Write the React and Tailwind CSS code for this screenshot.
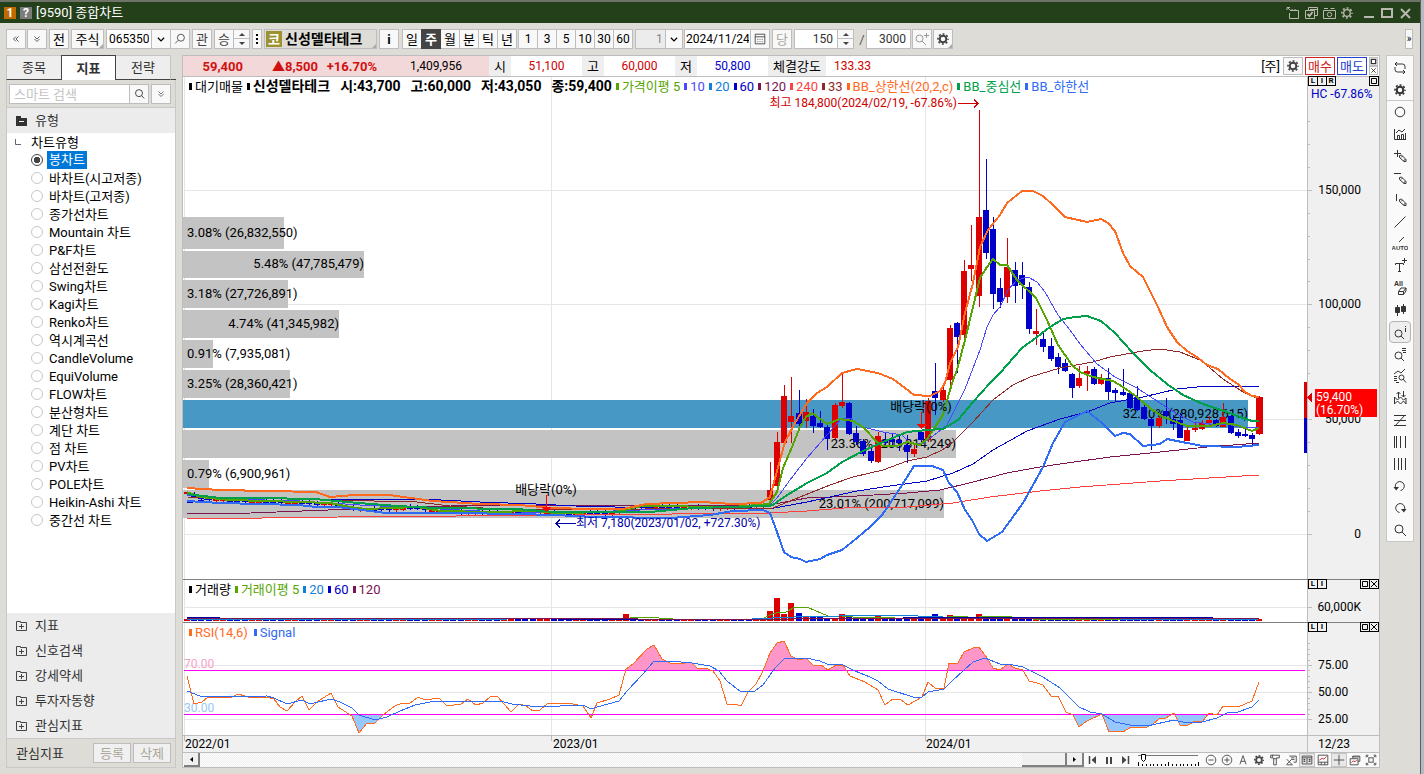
import { useState } from "react";

const CHART_TYPES = [
  "봉차트", "바차트(시고저종)", "바차트(고저종)", "종가선차트", "Mountain 차트", "P&F차트", "삼선전환도",
  "Swing차트", "Kagi차트", "Renko차트", "역시계곡선", "CandleVolume", "EquiVolume", "FLOW차트",
  "분산형차트", "계단 차트", "점 차트", "PV차트", "POLE차트", "Heikin-Ashi 차트", "중간선 차트",
];

const SECTIONS = ["지표", "신호검색", "강세약세", "투자자동향", "관심지표"];
const PERIODS = ["일", "주", "월", "분", "틱", "년"];
const MINUTES = ["1", "3", "5", "10", "30", "60"];

const UP = "#dc0000";
const DOWN = "#0000c8";

// x, high, low, body top, body bottom, up
const CANDLES = [
  [770, 462, 500, 490, 500, 1], [777, 432, 486, 442, 486, 1], [784, 385, 443, 396, 443, 1],
  [791, 377, 443, 416, 422, 1], [799, 390, 430, 413, 424, 0], [806, 399, 428, 412, 421, 1],
  [813, 409, 433, 416, 426, 0], [820, 411, 428, 423, 427, 0], [827, 425, 450, 427, 439, 0],
  [835, 403, 439, 405, 438, 1], [842, 374, 408, 402, 406, 1], [849, 402, 435, 403, 434, 0],
  [856, 426, 445, 433, 442, 0], [863, 439, 456, 441, 454, 0], [871, 448, 463, 451, 461, 0],
  [878, 432, 463, 436, 462, 1], [885, 432, 446, 440, 443, 0], [892, 433, 448, 439, 442, 0],
  [899, 435, 451, 440, 443, 0], [907, 435, 463, 445, 452, 0], [914, 443, 457, 449, 454, 1],
  [921, 430, 442, 432, 440, 0], [928, 398, 442, 401, 440, 1], [935, 363, 415, 391, 398, 0],
  [943, 386, 402, 390, 400, 1], [950, 325, 388, 328, 380, 1], [957, 322, 373, 323, 337, 0],
  [964, 260, 343, 271, 335, 1], [971, 225, 281, 265, 269, 1], [979, 110, 307, 217, 296, 1],
  [986, 159, 259, 210, 253, 0], [993, 217, 309, 229, 294, 0], [1000, 278, 308, 288, 302, 0],
  [1007, 238, 303, 267, 297, 1], [1015, 262, 303, 270, 286, 0], [1022, 262, 299, 275, 285, 0],
  [1029, 282, 334, 287, 329, 0], [1036, 309, 345, 331, 334, 1], [1043, 331, 352, 339, 347, 0],
  [1051, 338, 361, 346, 359, 0], [1058, 353, 374, 357, 367, 0], [1065, 359, 372, 363, 371, 0],
  [1072, 373, 398, 374, 388, 0], [1079, 366, 388, 378, 386, 1], [1087, 366, 391, 371, 374, 1],
  [1094, 367, 385, 369, 384, 0], [1101, 374, 385, 379, 384, 1], [1108, 368, 400, 378, 392, 0],
  [1115, 388, 401, 390, 393, 0], [1123, 369, 396, 392, 395, 0], [1130, 392, 409, 393, 408, 0],
  [1137, 386, 411, 397, 410, 0], [1144, 405, 420, 407, 419, 0], [1151, 418, 450, 419, 426, 0],
  [1159, 416, 428, 418, 426, 1], [1166, 398, 424, 411, 416, 0], [1173, 415, 430, 419, 424, 0],
  [1180, 413, 438, 420, 438, 0], [1187, 427, 441, 430, 441, 1], [1195, 423, 432, 428, 430, 1],
  [1202, 420, 430, 423, 429, 1], [1209, 416, 425, 420, 423, 1], [1216, 419, 427, 420, 426, 0],
  [1223, 403, 427, 417, 427, 1], [1231, 415, 434, 416, 433, 0], [1238, 429, 438, 432, 436, 0],
  [1245, 429, 437, 434, 436, 0], [1252, 433, 445, 435, 439, 0], [1259, 396, 435, 397, 434, 1],
];

const MA5 = "187,492 200,497 230,500 300,502 330,503 350,507 366,509 417,507 441,511 488,512 536,511 555,513 615,512 642,506 733,507 769,504 777,492 783,468 792,447 800,427 806,417 812,413 827,424 840,419 853,421 863,427 878,443 883,446 897,446 907,442 920,445 928,438 935,427 943,415 948,397 953,380 957,370 965,340 973,307 980,278 987,267 993,259 1000,265 1007,265 1017,280 1036,298 1047,320 1058,345 1072,365 1080,372 1093,377 1113,381 1123,387 1137,397 1150,408 1163,417 1187,426 1210,426 1223,423 1237,425 1252,431 1259,428";

const PRICE_LINES = [
  { color: "#ff4040", width: 1, points: "187,519 338,517 575,515 769,513 807,511 857,507 907,507 953,503 990,497 1040,491 1080,487 1160,481 1259,475" },
  { color: "#7c1450", width: 1, points: "187,514 251,513 354,509 401,508 476,505 575,505 769,505 807,498 857,496 907,493 940,490 973,482 1007,473 1040,467 1060,464 1110,457 1160,452 1207,447 1259,443" },
  { color: "#0000c8", width: 1, points: "187,503 215,498 310,499 441,500 480,502 536,504 575,506 654,508 769,509 807,502 857,491 890,486 927,481 953,473 973,464 993,450 1027,431 1060,419 1087,412 1110,403 1143,397 1177,389 1207,386 1237,387 1259,386" },
  { color: "#902828", width: 1, points: "187,497 259,498 330,500 417,502 450,506 500,509 600,510 690,508 773,508 800,497 830,485 853,477 883,470 907,461 927,457 942,450 953,442 973,422 993,400 1013,385 1030,377 1060,368 1093,362 1110,357 1143,351 1160,349 1180,352 1200,360 1210,368 1223,379 1243,392 1259,399" },
  { color: "#4848ff", width: 1, points: "187,495 230,499 300,501 360,505 420,508 480,511 560,513 640,510 700,508 769,506 777,498 790,480 807,458 827,435 842,418 850,418 863,427 883,432 902,435 910,443 922,444 933,436 947,425 958,403 965,389 980,350 987,327 993,315 1000,307 1008,290 1017,280 1028,277 1037,282 1045,292 1058,315 1070,330 1080,344 1097,364 1115,377 1137,388 1160,403 1177,414 1193,422 1210,424 1227,424 1243,428 1259,427" },
  { color: "#55a500", width: 2, points: MA5 },
  { color: "#00a04a", width: 2, points: "187,494 220,498 259,498 314,499 358,503 397,506 437,508 516,509 555,512 595,512 650,512 694,508 769,506 773,505 784,497 807,483 827,473 842,462 863,451 883,442 907,432 927,430 943,429 958,420 973,402 990,383 1000,373 1007,365 1022,348 1037,337 1050,327 1063,319 1075,317 1087,316 1101,321 1115,333 1132,352 1150,370 1167,384 1183,395 1203,404 1227,412 1240,417 1252,421 1259,421" },
  { color: "#2f6bf5", width: 2, points: "187,501 220,503 299,505 316,507 338,507 362,510 386,513 457,513 516,514 555,515 595,517 670,518 710,515 733,511 763,510 770,513 777,532 784,552 791,557 800,559 806,562 820,559 827,555 842,550 857,538 870,527 882,515 897,493 914,466 932,466 943,470 949,483 957,492 965,510 972,520 979,534 987,541 1002,532 1023,503 1043,467 1053,443 1065,422 1087,411 1102,423 1115,436 1123,433 1130,434 1143,446 1160,444 1167,439 1187,443 1203,446 1237,447 1259,445" },
  { color: "#ff6a1f", width: 2, points: "187,488 220,490 316,492 330,497 354,495 389,495 433,501 480,504 520,505 551,508 591,509 623,509 646,504 702,502 733,504 761,503 770,497 780,460 785,442 795,423 807,403 817,393 827,387 842,373 857,369 878,373 893,379 905,388 914,395 930,396 940,391 945,383 950,363 958,347 965,313 973,283 980,247 988,230 1000,215 1007,203 1022,191 1033,191 1043,196 1053,205 1065,217 1087,222 1101,219 1108,223 1115,231 1123,253 1130,266 1143,277 1158,307 1167,327 1177,342 1187,351 1197,357 1207,365 1218,369 1230,379 1238,384 1245,392 1252,396 1259,397" },
];

const PROFILE = [
  { y: 217, h: 32, end: 284, label: "3.08% (26,832,550)", at: 237 },
  { y: 251, h: 27, end: 364, label: "5.48% (47,785,479)", at: 268, inside: true },
  { y: 280, h: 28, end: 288, label: "3.18% (27,726,891)", at: 298 },
  { y: 310, h: 28, end: 339, label: "4.74% (41,345,982)", at: 328, inside: true },
  { y: 340, h: 28, end: 213, label: "0.91% (7,935,081)", at: 358 },
  { y: 370, h: 28, end: 290, label: "3.25% (28,360,421)", at: 388 },
  { y: 400, h: 28, end: 1248, label: "32.20% (280,928,615)", at: 418, inside: true, current: true },
  { y: 430, h: 28, end: 956, label: "23.36% (203,814,249)", at: 448, inside: true },
  { y: 460, h: 28, end: 209, label: "0.79% (6,900,961)", at: 478 },
  { y: 490, h: 28, end: 944, label: "23.01% (200,717,099)", at: 508, inside: true },
];

const RSI = "187,676 194,704 202,702 208,697 230,698 238,694 252,698 267,697 274,699 280,707 287,711 295,702 302,696 309,710 317,702 331,693 338,707 352,716 359,733 367,723 375,723 383,715 395,706 402,703 409,704 418,697 425,700 439,698 447,706 461,704 468,699 476,705 483,703 490,697 497,696 504,704 511,712 519,704 526,706 533,711 540,710 547,704 560,703 568,703 583,706 591,718 597,703 610,699 619,695 626,669 633,664 647,649 654,645 662,659 670,663 685,663 691,662 698,669 705,668 713,671 720,681 727,704 735,704 741,706 748,692 756,684 763,671 770,653 777,643 784,641 791,656 799,660 806,658 813,665 821,665 828,670 836,665 843,665 850,676 865,682 878,690 885,705 893,699 900,699 908,705 922,697 928,682 936,689 944,688 949,663 958,663 964,652 973,648 979,647 987,658 993,668 1000,670 1008,664 1015,668 1023,670 1029,681 1037,683 1043,685 1051,696 1058,696 1066,712 1073,715 1079,727 1087,721 1102,714 1109,732 1117,731 1123,732 1131,727 1147,727 1153,724 1159,719 1166,718 1174,713 1180,725 1188,725 1195,721 1203,721 1209,713 1217,715 1223,706 1238,707 1252,701 1256,690 1259,682";
const SIGNAL = "187,691 200,696 230,697 267,696 274,698 287,704 302,700 310,704 331,699 340,702 352,708 359,715 375,720 387,717 400,711 415,705 435,701 450,701 480,702 500,701 512,704 530,706 560,706 583,705 591,709 597,707 619,701 627,691 643,674 654,661 670,661 692,663 710,666 719,671 727,681 741,692 755,691 763,685 775,668 784,659 806,658 820,661 827,664 843,665 855,671 870,677 878,681 888,689 916,698 922,697 928,692 944,689 952,681 964,670 973,662 985,658 1000,664 1008,664 1023,667 1043,677 1060,688 1079,707 1090,712 1102,714 1115,722 1130,725 1147,726 1174,720 1187,723 1202,722 1217,718 1227,713 1238,712 1252,707 1259,700";

// volume bars that rise above the flat base, keyed by x
const VOLUME_PEAKS = { 626: 7, 770: 10, 777: 23, 784: 7, 791: 18, 799: 8, 806: 4, 813: 4, 820: 4, 842: 7, 849: 4, 878: 5, 928: 4, 935: 7, 950: 6, 964: 5, 979: 7, 986: 4, 993: 4 };

// flat early period, one small candle a week along the short average
function earlyCandles() {
  const pts = MA5.split(" ").map((p) => p.split(",").map(Number));
  const out = [];
  for (let i = 0; i < 81; i++) {
    const x = Math.round(187 + i * 7.2);
    const k = pts.findIndex((p) => p[0] >= x);
    const [x1, y1] = pts[k];
    const [x0, y0] = pts[Math.max(0, k - 1)];
    const y = Math.round(x1 === x0 ? y1 : y0 + ((y1 - y0) * (x - x0)) / (x1 - x0));
    const wig = (i * 7) % 5;
    out.push([x, y - 1 - (wig % 3), y + 3 + (wig % 2), y, y + 2, wig === 0 || wig === 3 ? 1 : 0]);
  }
  return out;
}

const ALL_CANDLES = [...earlyCandles(), ...CANDLES];

function Glyph({ children, size = 16, w = 1, className = "" }) {
  return (
    <svg width={size} height={size} viewBox="0 0 16 16" fill="none" stroke="currentColor" strokeWidth={w} className={`shrink-0 ${className}`} aria-hidden="true">
      {children}
    </svg>
  );
}

function Gear({ thin, className = "" }) {
  return (
    <Glyph className={className}>
      <circle cx="8" cy="8" r="3.3" strokeWidth={thin ? 1.3 : 2} />
      <circle cx="8" cy="8" r="5" strokeWidth="1.6" strokeDasharray="1.96 1.96" strokeDashoffset="1" />
    </Glyph>
  );
}

const pencil = <path d="M7.5 7.5l2-.5 4.5 4.5v2h-2L7.5 9.5zM9 9.5l1.5-1.5M11.5 13l2-2" />;
const lens = <path d="M10 9.5a3.5 3.5 0 1 0-7 0 3.5 3.5 0 0 0 7 0zM9 12l3 3" />;

const TOOLS = [
  ["반복", <path d="M5 2L3 4l2 2M3 4h7.5a2.5 2.5 0 0 1 2.5 2.5V9M11 14l2-2-2-2M13 12H5.500A2.500 2.500 0 0 1 3 9.500V7" />],
  ["설정", null],
  ["원", <circle cx="8" cy="8" r="4.8" />],
  ["지표 추가", <path d="M2.500 3v10.500H14M5.500 13V9.500h2V13M9.500 13V8.500h2V13M13.500 13V7M4 7l3-3 3 2 3-3" />],
  ["십자 그리기", <>{pencil}<path d="M2 5.500h7M5.500 2v7" /></>],
  ["수평선", <>{pencil}<path d="M2 3.500h7" /></>],
  ["수직선", <>{pencil}<path d="M4.500 2v7" /></>],
  ["추세선", <path d="M2.500 13.500l11-11" />],
  ["자동 추세선", <><path d="M7 6l5-5" /><text x="8" y="14" textAnchor="middle" fontSize="6" fill="currentColor" stroke="none" fontFamily="Liberation Sans, sans-serif" fontWeight="bold">AUTO</text></>],
  ["문자", <path d="M3.500 7V5.500h8V7M7.500 5.500v8M6 13.500h3M12.500 0v5M10 2.500h5" />],
  ["모두 지우기", <><text x="2" y="6" fontSize="7" fill="currentColor" stroke="none" fontFamily="Liberation Sans, sans-serif" fontWeight="bold">All</text><path d="M6.500 11.500l2.500-3.500h5l-2.500 3.500zM6.500 11.500v3h5v-3M14 8v3l-2.500 3.500" /></>],
  ["봉", <><path d="M5.500 3v11M11.500 2v10" /><path d="M3.500 5.500h4v5h-4zM9.500 4.500h4v5h-4z" fill="currentColor" /></>],
  ["정보 조회", <>{lens}<path d="M13.500 4v4M13.500 2v1" /></>],
  ["목록 조회", <>{lens}<path d="M10 2.500h4M10 4.500h4M11 6.500h3" /></>],
  ["구간 조회", <><path d="M2 6l4-3 3 2 4-4M2 8.500h3M2 10.500h3M2 12.500h3M4 14.500h3" /><circle cx="9.500" cy="9.500" r="2.500" /><path d="M11 11l3 3.500" /></>],
  ["매매 신호", <path d="M2.500 14V7l3 3 3-3 3 3 2.500-2v6M2.500 14l3-3 3 3 3-3 2.500 3M6.500 8V2M4.500 4l2-2 2 2M11.500 1v6M9.500 5l2 2 2-2" />],
  ["갠 팬", <path d="M2 3.500h12M2 8.500h12M2 13.500h12M13 3L3 14" />],
  ["피보나치", <path d="M2.500 2v12M4.500 2v12M8.500 2v12M13.500 2v12" />],
  ["시간대", <path d="M2.500 2v12M6.500 2v12M9.500 2v12M13.500 2v12" />],
  ["되돌리기", <><path d="M4 10.500a4.500 4.500 0 1 1 4.500 2" /><path d="M1.500 9h5.500L4.200 12.500z" fill="currentColor" stroke="none" /></>],
  ["다시 실행", <><path d="M12 10.500a4.500 4.500 0 1 0-4.500 2" /><path d="M14.500 9H9l2.800 3.500z" fill="currentColor" stroke="none" /></>],
  ["확대", <path d="M11 7a4 4 0 1 0-8 0 4 4 0 0 0 8 0zM10 10l4 4" />],
];

const BOTTOM_TOOLS = [
  ["축소", <><circle cx="8" cy="8" r="5.500" /><path d="M5 8h6" /></>],
  ["확대", <><circle cx="8" cy="8" r="5.500" /><path d="M5 8h6M8 5v6" /></>],
  ["글자", <path d="M4.500 13L8 3l3.500 10M5.500 9.500h5" />],
  ["설정", null],
  ["도구", <path d="M3 2.500h10v3h-3v1H6v-1H3zM6.500 6.500v7h3v-7M5 2v3" />],
  ["엑셀 저장", <path d="M6 3.500h8v7h-3M8 5.500h4M9 7.500h3M3 7l6 6M9 7l-6 6M3 13.500h7" />],
  ["표 보기", <><path d="M2.500 3.500h11v9h-11zM2.500 5.500h11M8 6v6" /><path d="M4 7.500h2M4 9.500h2M10 7.500h2M10 9.500h2" strokeWidth="1.500" /></>, true],
  ["분할 보기", <><path d="M2.500 2.500h11v11h-11zM2.500 10.500h11M6 10.500v3M10 10.500v3" /><path d="M4 8l3-2 2 1 3-3" stroke="#c02020" /></>],
  ["십자선", <path d="M2 8h12M8 2v12" />, true],
  ["새 창", <><path d="M5.500 6V3.500h8v6H11M2.500 6.500h9v7h-9zM5 4.500h8" /><path d="M4 11l2-2 2 1 2-2" stroke="#c02020" /></>],
  ["전체 화면", <path d="M2.500 5V2.500H5M11 2.500h2.500V5M13.500 11v2.500H11M5 13.500H2.500V11M5.500 5.500h5v5h-5zM3 3l2 2M13 3l-2 2M3 13l2-2M13 13l-2-2" />],
];

function TitleBar() {
  return (
    <header className="flex h-[23px] items-center border-t-2 border-[#6e7468] bg-[#24401a] pr-[7px] pl-1 text-[#d8d8d8]">
      <span className="flex h-3 w-3 items-center justify-center bg-[#c06a00] font-bold text-white">1</span>
      <span className="ml-1 flex h-3 w-3 items-center justify-center bg-[#7c7c7c] font-bold text-white">?</span>
      <h1 className="ml-1 text-[13px] whitespace-pre text-white">[9590] 종합차트</h1>
      <div className="ml-auto flex items-center gap-[2px] text-[#b8b8ae]">
        <button aria-label="화면 복제"><Glyph><path d="M5.500 5.500h8v8h-9V8M7 4v2M10 4v2M2 5V2.500h3M2 2l4 4" /></Glyph></button>
        <button aria-label="화면 목록"><Glyph><path d="M5.500 5V2.500h9v8H12M2.500 5.500h9v8h-9zM7 4.500h7" /><path d="M4.500 9l2 2 3-4" strokeWidth="2" /></Glyph></button>
        <button aria-label="캡처"><Glyph><path d="M2.500 5.500h12v8h-12zM3 3.500h4M9.500 3.500h4" /><circle cx="8.500" cy="9.500" r="2.200" /></Glyph></button>
        <button aria-label="설정"><Gear thin /></button>
        <button aria-label="최소화" className="ml-1"><Glyph w={2}><path d="M3 12h10" /></Glyph></button>
        <button aria-label="최대화"><Glyph w={2}><path d="M3 4h10v8H3z" /></Glyph></button>
        <button aria-label="닫기"><Glyph w={2}><path d="M4 4l9 9M13 4l-9 9" /></Glyph></button>
      </div>
    </header>
  );
}

const box = "flex h-5 shrink-0 items-center justify-center border border-[#bdbdbd] bg-[#f8f8f8]";

function Chevron() {
  return <Glyph size={10} w={2}><path d="M3 6l5 5 5-5" /></Glyph>;
}

function Spin({ label }) {
  return (
    <div className="flex h-5 w-4 shrink-0 flex-col border border-l-0 border-[#bdbdbd] bg-[#f8f8f8]">
      <button aria-label={`${label} 증가`} className="flex h-[9px] items-center justify-center border-b border-[#bdbdbd]">
        <svg width="6" height="3" viewBox="0 0 6 3" fill="#444"><path d="M0 3l3-3 3 3z" /></svg>
      </button>
      <button aria-label={`${label} 감소`} className="flex h-[9px] items-center justify-center">
        <svg width="6" height="3" viewBox="0 0 6 3" fill="#444"><path d="M0 0l3 3 3-3z" /></svg>
      </button>
    </div>
  );
}

function Corner() {
  return <svg width="4" height="4" viewBox="0 0 4 4" fill="#aaa" className="absolute right-0 bottom-0"><path d="M4 0v4H0z" /></svg>;
}

function Toolbar() {
  const [period, setPeriod] = useState("주");
  return (
    <div className="flex h-8 items-center overflow-hidden pl-[6px] text-[13px]">
      <button className={`${box} w-5`} aria-label="이전"><Glyph size={10}><path d="M8 4L4 8l4 4M12 4L8 8l4 4" /></Glyph></button>
      <button className={`${box} ml-px w-5`} aria-label="펼치기"><Glyph size={10}><path d="M4 4l4 4 4-4M4 8l4 4 4-4" /></Glyph></button>
      <button className={`${box} ml-[2px] w-5`}>전</button>
      <button className={`${box} relative ml-[2px] w-[33px]`}>주식<Corner /></button>
      <input aria-label="종목코드" defaultValue="065350" className="ml-[2px] h-5 w-[46px] shrink-0 border border-[#bdbdbd] bg-white px-[2px] text-[12px]" />
      <button className={`${box} -ml-px w-5`} aria-label="종목 목록"><Chevron /></button>
      <button className={`${box} -ml-px w-5 text-[#444]`} aria-label="종목 검색"><Glyph size={14}><path d="M13 6.500a4 4 0 1 0-8 0 4 4 0 0 0 8 0zM6 9.500L2.500 13" /></Glyph></button>
      <button className={`${box} ml-[2px] w-5 text-[#444]`}>관</button>
      <button className={`${box} ml-[2px] w-5 text-[#444]`}>승</button>
      <Spin label="종목" />
      <button className={`${box} ml-[2px] w-[10px] font-bold`} aria-label="더보기">
        <svg width="2" height="10" viewBox="0 0 2 10"><path d="M0 0h2v2H0zM0 4h2v2H0zM0 8h2v2H0z" /></svg>
      </button>
      <button className="relative ml-[2px] flex h-5 w-[113px] shrink-0 items-center border border-[#bdbdbd] bg-[#dddcd6] px-px text-[14px] font-bold">
        <span className="mr-[3px] flex h-4 w-4 items-center justify-center bg-[#9c9230] text-[13px] text-white">코</span>
        신성델타테크<Corner />
      </button>
      <button className={`${box} ml-[2px] w-5 font-bold`}>i</button>
      <div className="ml-[3px] flex">
        {PERIODS.map((p) => (
          <button
            key={p}
            onClick={() => setPeriod(p)}
            aria-pressed={p === period}
            className={`-ml-px flex h-5 w-5 items-center justify-center border first:ml-0 ${p === period ? "relative border-[#444] bg-[#444] font-bold text-white" : "border-[#bdbdbd] bg-[#f8f8f8]"}`}
          >
            {p}
          </button>
        ))}
      </div>
      <div className="ml-px flex text-[12px]">
        {MINUTES.map((m) => (
          <button key={m} className="-ml-px flex h-5 w-5 items-center justify-center border border-[#bdbdbd] bg-[#f8f8f8] first:ml-0">{m}</button>
        ))}
      </div>
      <div className="relative ml-[2px] flex h-5 w-[48px] shrink-0 border border-[#bdbdbd] bg-[#ececec]">
        <select aria-label="간격" className="w-full appearance-none bg-transparent pl-[20px] text-[12px] text-[#888]">
          <option>1</option>
        </select>
        <span className="pointer-events-none absolute inset-y-0 right-0 flex w-[17px] items-center justify-center border-l border-[#bdbdbd] bg-[#f8f8f8]"><Chevron /></span>
      </div>
      <input aria-label="기준일" defaultValue="2024/11/24" className="ml-px h-5 w-[67px] shrink-0 border border-[#bdbdbd] bg-white px-px text-[12px]" />
      <button className={`${box} -ml-px w-5 text-[#444]`} aria-label="달력"><Glyph size={14}><path d="M2.500 2.500h11v11h-11zM2.500 5.500h11" /><path d="M5 8.500h7M5 11h7" strokeDasharray="1 1.500" /></Glyph></button>
      <button className={`${box} ml-[2px] w-5 text-[#aaa69a]`}>당</button>
      <input aria-label="표시 개수" defaultValue="150" className="ml-[2px] h-5 w-[44px] shrink-0 border border-[#bdbdbd] bg-white px-1 text-right text-[12px] text-[#333]" />
      <Spin label="개수" />
      <span className="ml-1 w-[8px] text-center text-[#555]">/</span>
      <input aria-label="전체 개수" defaultValue="3000" className="h-5 w-[45px] shrink-0 border border-[#bdbdbd] bg-white px-1 text-right text-[12px] text-[#333]" />
      <button className={`${box} ml-px w-5 text-[#999]`} aria-label="확대"><Glyph><path d="M9 7.500a3.500 3.500 0 1 0-7 0 3.500 3.500 0 0 0 7 0zM8 10l4 4M12.500 2v5M10 4.500h5" /></Glyph></button>
      <button className={`${box} relative ml-px w-5 text-[#444]`} aria-label="차트 설정"><Gear /><Corner /></button>
      <button className={`${box} mr-[7px] ml-auto w-2`} aria-label="더 보기"><span className="text-[10px]">»</span></button>
    </div>
  );
}

function Sidebar() {
  const [type, setType] = useState("봉차트");
  return (
    <aside className="flex w-[170px] shrink-0 flex-col text-[13px] text-[#333]">
      <div role="tablist" className="flex h-[25px]">
        <button role="tab" aria-selected="false" className="w-[55px] border-t border-b border-l border-[#c4c4c4] border-b-[#444] bg-[#eee]">종목</button>
        <button role="tab" aria-selected="true" className="w-[55px] border-x border-t border-[#444] bg-white font-bold">지표</button>
        <button role="tab" aria-selected="false" className="w-[55px] border-t border-r border-b border-[#c4c4c4] border-b-[#444] bg-[#eee]">전략</button>
        <div className="flex-1 border-b border-[#444]" />
      </div>
      <div className="flex flex-1 flex-col border-x border-b border-[#c8c8c8]">
        <div className="flex items-center px-[2px] pt-1 pb-[3px]">
          <input aria-label="검색어" placeholder="스마트 검색" className="h-5 w-[121px] border border-[#bdbdbd] bg-white px-1 placeholder:text-[#c4c4c4]" />
          <button className={`${box} -ml-px w-5`} aria-label="검색"><Glyph size={14}><path d="M12 7a4 4 0 1 0-8 0 4 4 0 0 0 8 0zM11 10l3 3" /></Glyph></button>
          <button className={`${box} ml-[2px] w-5`} aria-label="검색 옵션"><Glyph size={10}><path d="M4 4l4 4 4-4M4 8l4 4 4-4" /></Glyph></button>
        </div>
        <button className="flex h-[26px] items-center border-t border-[#c8c8c8] bg-[#ececec] pl-[9px]">
          <svg width="11" height="10" viewBox="0 0 11 10"><path d="M0 0h5v2h6v8H0z" fill="#333" /><path d="M3 5.500h5" stroke="#fff" /></svg>
          <span className="ml-2">유형</span>
        </button>
        <div className="flex-1 bg-white text-black">
          <div className="flex h-[18px] items-center pl-2">
            <svg width="6" height="6" viewBox="0 0 6 6"><path d="M.5 0v5.500H6" fill="none" stroke="#666" /></svg>
            <span className="ml-[10px]">차트유형</span>
          </div>
          {CHART_TYPES.map((t) => (
            <label key={t} className="flex h-[18px] items-center pl-[24px]">
              <input
                type="radio"
                name="chart-type"
                checked={t === type}
                onChange={() => setType(t)}
                className="h-3 w-3 shrink-0 appearance-none rounded-full border border-[#c8c8c8] bg-white checked:border-[#444] checked:bg-[radial-gradient(#444_45%,#fff_50%)]"
              />
              <span className={`ml-1 px-[2px] whitespace-nowrap ${t === type ? "bg-[#0078d7] leading-[18px] text-white" : ""}`}>{t}</span>
            </label>
          ))}
        </div>
        <div className="bg-[#ececec]">
          {SECTIONS.map((s) => (
            <button key={s} className="flex h-[25px] w-full items-center pl-[9px]">
              <svg width="11" height="10" viewBox="0 0 11 10" fill="none" stroke="#444"><path d="M.5.500h4v1h6v8H.500zM3 5.500h5M5.500 3v5" /></svg>
              <span className="ml-2">{s}</span>
            </button>
          ))}
        </div>
        <div className="flex h-[29px] items-center border-t border-[#c8c8c8] pr-1 pl-[9px]">
          관심지표
          <button className="ml-auto h-5 w-[38px] border border-[#bdbdbd] bg-[#f0f0f0] leading-none text-[#aaa69a]">등록</button>
          <button className="ml-[2px] h-5 w-[38px] border border-[#bdbdbd] bg-[#f0f0f0] leading-none text-[#aaa69a]">삭제</button>
        </div>
      </div>
    </aside>
  );
}

function QuoteBar() {
  const cells = [["시", "51,100", "text-[#d00000]"], ["고", "60,000", "text-[#d00000]"], ["저", "50,800", "text-[#0000c8]"]];
  return (
    <div className="flex h-[22px] items-center border-y border-[#bdbdbd] bg-white text-[12px]">
      <div className="flex h-full w-[306px] shrink-0 items-center bg-[#f2d8d8]">
        <b className="w-[60px] text-right text-[13px] text-[#d01010]">59,400</b>
        <b className="w-[75px] text-right text-[13px] text-[#d01010]">▲8,500</b>
        <b className="w-[59px] text-right text-[13px] text-[#d01010]">+16.70%</b>
        <span className="w-[85px] text-right">1,409,956</span>
      </div>
      {cells.map(([name, value, tone]) => (
        <div key={name} className="flex h-full shrink-0 items-center">
          <span className="flex h-full w-[22px] items-center justify-center bg-[#eee] text-[13px]">{name}</span>
          <span className={`w-[71px] text-center ${tone}`}>{value}</span>
        </div>
      ))}
      <span className="flex h-full w-[58px] shrink-0 items-center justify-center bg-[#eee] text-[13px]">체결강도</span>
      <span className="ml-2 text-[#d00000]">133.33</span>
      <span className="mr-[3px] ml-auto text-[13px]">[주]</span>
      <button className="flex h-[18px] w-5 items-center justify-center border border-[#bdbdbd] bg-[#f8f8f8] text-[#444]" aria-label="주문 설정"><Gear /></button>
      <button className="ml-[2px] flex h-[18px] w-[30px] items-center justify-center border border-[#d02020] text-[13px] text-[#d02020]">매수</button>
      <button className="mx-[2px] flex h-[18px] w-[30px] items-center justify-center border border-[#2040d0] text-[13px] text-[#2040d0]">매도</button>
      <div className="flex flex-col pr-px text-[#333]">
        <button aria-label="창 확대" className="flex h-[9px] w-[9px] items-center justify-center border border-[#bdbdbd] bg-white"><Glyph size={7} w={3}><path d="M3 3h10v10H3z" /></Glyph></button>
        <button aria-label="창 닫기" className="flex h-[9px] w-[9px] items-center justify-center border border-[#bdbdbd] bg-white"><Glyph size={7} w={2}><path d="M3 3l10 10M13 3L3 13" /></Glyph></button>
      </div>
    </div>
  );
}

function Key({ color, children }) {
  return (
    <span className="flex items-center gap-[3px]" style={{ color }}>
      <i className="h-[7px] w-[3px] bg-current" />
      {children}
    </span>
  );
}

function PanelButtons({ letters, closable }) {
  const cls = "-ml-px flex h-[10px] w-[10px] items-center justify-center border border-black bg-[#f0f0f0] text-[8px] leading-none font-bold first:ml-0";
  return (
    <div className="absolute -top-px right-0 flex w-[71px] justify-between">
      <div className="flex">{letters.map((l) => <button key={l} className={cls}>{l}</button>)}</div>
      <div className="flex">
        <button aria-label="패널 확대" className={cls}><Glyph size={8} w={2}><path d="M3 3h10v10H3z" /></Glyph></button>
        {closable && <button aria-label="패널 닫기" className={cls}><Glyph size={8} w={2}><path d="M2 2l12 12M14 2L2 14" /></Glyph></button>}
      </div>
    </div>
  );
}

function Axis({ top, height, children }) {
  return (
    <>
      <rect x="1307" y={top} width="72" height={height} fill="#f0f0f0" />
      <path d={`M1307.500 ${top}v${height}`} stroke="#bdbdbd" />
      {children}
    </>
  );
}

function Grid({ top, height, rows }) {
  return (
    <g stroke="#e6e6e6">
      {[184, 551, 925].map((x) => <path key={x} d={`M${x}.5 ${top}v${height}`} />)}
      {rows.map((y) => <path key={y} d={`M184 ${y}.5H1307`} />)}
    </g>
  );
}

function Dividend({ x, y, stem }) {
  return (
    <>
      <path d={`M${x}.5 ${y + 6}v${stem}`} stroke="#f00" />
      <path d={`M${x - 4} ${y + 5 + stem}h9l-4 5h-1z`} fill="#f00" />
      <text x={x} y={y + 5} textAnchor="middle" fontSize="13">배당락(0%)</text>
    </>
  );
}

function PriceChart() {
  return (
    <div className="relative border-b border-[#808080]">
      <svg viewBox="183 77 1196 502" className="block h-auto w-full" shapeRendering="crispEdges" fontSize="12" role="img" aria-label="신성델타테크 주봉">
        <Grid top={77} height={502} rows={[190, 304, 419, 534]} />
        {PROFILE.map((p) => <rect key={p.y} x="183" y={p.y} width={p.end - 183} height={p.h} fill={p.current ? "#4898c6" : "#c3c3c3"} />)}
        <g fontSize="13">
          {PROFILE.map((p) => <text key={p.y} x={p.inside ? p.end : 187} y={p.at} textAnchor={p.inside ? "end" : "start"}>{p.label}</text>)}
        </g>
        {ALL_CANDLES.map(([x, high, low, top, bottom, up]) => (
          <g key={x} fill={up ? UP : DOWN}>
            <rect x={x} y={high} width="1" height={low - high} />
            <rect x={x - 3} y={top} width={x < 1259 ? 6 : 7} height={bottom - top} />
          </g>
        ))}
        {PRICE_LINES.map((l) => <polyline key={l.color} points={l.points} fill="none" stroke={l.color} strokeWidth={l.width} strokeLinejoin="round" />)}
        <Dividend x={546} y={489} stem={13} />
        <Dividend x={921} y={406} stem={13} />
        <g fill="#d00000">
          <text x="957" y="107" textAnchor="end">최고 184,800(2024/02/19, -67.86%)</text>
          <path d="M958 103.500h20M974 99.500l4 4-4 4" fill="none" stroke="#d00000" />
        </g>
        <g fill="#0000a8">
          <text x="576" y="527">최저 7,180(2023/01/02, +727.30%)</text>
          <path d="M556 523.500h20M560 519.500l-4 4 4 4" fill="none" stroke="#0000a8" />
        </g>
        <Axis top={77} height={502}>
          <path d="M1308 190.500h4M1308 304.500h4M1308 419.500h4M1308 534.500h4M1308 121.500h2M1308 144.500h2M1308 167.500h2M1308 213.500h2M1308 236.500h2M1308 259.500h2M1308 281.500h2M1308 327.500h2M1308 350.500h2M1308 373.500h2M1308 442.500h2M1308 465.500h2M1308 488.500h2M1308 511.500h2" stroke="#bdbdbd" />
          <text x="1311" y="98" fill="#0000c8">HC -67.86%</text>
          <text x="1361" y="194" textAnchor="end">150,000</text>
          <text x="1361" y="308" textAnchor="end">100,000</text>
          <text x="1361" y="423" textAnchor="end">50,000</text>
          <text x="1361" y="538" textAnchor="end">0</text>
          <rect x="1304" y="382" width="3" height="36" fill={UP} />
          <rect x="1304" y="418" width="3" height="35" fill={DOWN} />
          <path d="M1312 392v11l-5-5.500z" fill={UP} />
          <rect x="1315" y="389" width="62" height="28" fill="#f00" />
          <text x="1316" y="401" fill="#fff">59,400</text>
          <text x="1316" y="414" fill="#fff">(16.70%)</text>
        </Axis>
      </svg>
      <div className="pointer-events-none absolute top-0 left-[6px] flex h-[18px] items-center gap-1 text-[13px] whitespace-nowrap">
        <Key color="#000">대기매물</Key>
        <Key color="#000">
          <b className="flex gap-[10px] text-[14px]"><span>신성델타테크</span><span>시:43,700</span><span>고:60,000</span><span>저:43,050</span><span>종:59,400</span></b>
        </Key>
        <Key color="#55a500">가격이평 5</Key>
        <Key color="#4848ff">10</Key>
        <Key color="#1080d8">20</Key>
        <Key color="#0000c8">60</Key>
        <Key color="#7c1450">120</Key>
        <Key color="#ff4040">240</Key>
        <Key color="#902828">33</Key>
        <Key color="#ff6a1f">BB_상한선(20,2,c)</Key>
        <Key color="#00a04a">BB_중심선</Key>
        <Key color="#2f6bf5">BB_하한선</Key>
      </div>
      <PanelButtons letters={["L", "I", "R"]} />
    </div>
  );
}

function VolumeChart() {
  return (
    <div className="relative border-b border-[#808080]">
      <svg viewBox="183 580 1196 42" className="block h-auto w-full" shapeRendering="crispEdges" fontSize="12" role="img" aria-label="거래량">
        <Grid top={580} height={42} rows={[607]} />
        {ALL_CANDLES.map(([x, , , , , up]) => {
          const h = VOLUME_PEAKS[x] || (x > 770 && x < 1000 ? 3 : 2);
          return <rect key={x} x={x - 3} y={621 - h} width="6" height={h} fill={up || x === 626 ? UP : DOWN} />;
        })}
        <g fill="none">
          <path d="M630 617.500h29M659 618.500h14M764 618l6-3 9-3h7l9-5h12l9 4 12 5 4 1M842 616.500h11M853 617.500h42M948 616.500h20M979 616.500h33M1033 619.500h90" stroke="#55a500" />
          <path d="M187 619.500h320M752 618.500h20M772 617.500h22M794 616.500h45M839 615.500h79M918 616.500h25M1120 619.500h138" stroke="#1080d8" />
          <path d="M187 617.500h33M903 617.500h310M560 619.500h120" stroke="#0000a0" />
          <path d="M187 618.500h451M638 619.500h150M788 618.500h471" stroke="#7c1450" />
        </g>
        <Axis top={580} height={42}>
          <path d="M1308 607.500h4" stroke="#bdbdbd" />
          <text x="1361" y="611" textAnchor="end">60,000K</text>
        </Axis>
      </svg>
      <div className="pointer-events-none absolute top-0 left-[6px] flex h-[18px] items-center gap-1 text-[13px] whitespace-nowrap">
        <Key color="#000">거래량</Key>
        <Key color="#55a500">거래이평 5</Key>
        <Key color="#1080d8">20</Key>
        <Key color="#0000c8">60</Key>
        <Key color="#7c1450">120</Key>
      </div>
      <PanelButtons letters={["L", "I"]} closable />
    </div>
  );
}

function RsiChart() {
  return (
    <div className="relative border-b border-[#bdbdbd]">
      <svg viewBox="183 623 1196 112" className="block h-auto w-full" shapeRendering="crispEdges" fontSize="12" role="img" aria-label="RSI">
        <defs>
          <clipPath id="overbought"><rect x="600" y="623" width="430" height="47" /></clipPath>
          <clipPath id="oversold"><rect x="184" y="715" width="1080" height="20" /></clipPath>
        </defs>
        <Grid top={623} height={112} rows={[665, 692, 719]} />
        <polygon points={`187,670 ${RSI} 1259,670`} fill="#ff96c8" clipPath="url(#overbought)" />
        <polygon points={`187,714 ${RSI} 1259,714`} fill="#96c8ff" clipPath="url(#oversold)" />
        <text x="184" y="668" fill="#f8a0c8">70.00</text>
        <text x="184" y="712" fill="#96c8f8">30.00</text>
        <path d="M184 670.500h1121M184 714.500h1121" stroke="#f0f" />
        <polyline points={RSI} fill="none" stroke="#ff6a1f" />
        <polyline points={SIGNAL} fill="none" stroke="#2f6bf5" />
        <Axis top={623} height={112}>
          <path d="M1308 665.500h4M1308 692.500h4M1308 719.500h4M1308 643.500h2M1308 649.500h2M1308 654.500h2M1308 660.500h2M1308 670.500h2M1308 676.500h2M1308 681.500h2M1308 687.500h2M1308 698.500h2M1308 703.500h2M1308 709.500h2M1308 714.500h2" stroke="#bdbdbd" />
          <text x="1318" y="669">75.00</text>
          <text x="1318" y="696">50.00</text>
          <text x="1318" y="723">25.00</text>
        </Axis>
      </svg>
      <div className="pointer-events-none absolute top-0 left-[6px] flex h-[18px] items-center gap-[6px] text-[13px] whitespace-nowrap">
        <Key color="#ff6a1f">RSI(14,6)</Key>
        <Key color="#2f6bf5">Signal</Key>
      </div>
      <PanelButtons letters={["L", "I"]} closable />
    </div>
  );
}

function DateAxis() {
  return (
    <svg viewBox="183 736 1196 16" className="block h-auto w-full bg-[#f0f0f0]" fontSize="12" role="img" aria-label="날짜">
      <path d="M184.500 736v5M551.500 736v5M925.500 736v5M1307.500 736v16" stroke="#bdbdbd" />
      <text x="185" y="748">2022/01</text>
      <text x="553" y="748">2023/01</text>
      <text x="926" y="748">2024/01</text>
      <text x="1318" y="748">12/23</text>
    </svg>
  );
}

function ScrollRow() {
  const raised = "flex h-full shrink-0 items-center justify-center border-r-2 border-b-2 border-[#808080] bg-[#f0f0f0]";
  return (
    <div className="flex h-[15px] items-center border-t border-[#bdbdbd] bg-[#fafafa]">
      <button aria-label="왼쪽으로" className={`${raised} ml-px w-4`}><svg width="3" height="5" viewBox="0 0 3 5"><path d="M3 0v5L0 2.500z" /></svg></button>
      <div className="flex h-full flex-1 justify-end bg-[repeating-conic-gradient(#fff_0_25%,#eee_0_50%)] bg-[length:2px_2px]">
        <div className={`${raised} w-[45px]`} />
      </div>
      <button aria-label="오른쪽으로" className={`${raised} w-[17px]`}><svg width="3" height="5" viewBox="0 0 3 5"><path d="M0 0v5l3-2.500z" /></svg></button>
      <div className="flex pl-px text-[#444]">
        <button aria-label="처음"><Glyph><path d="M4.500 4v8" strokeWidth="1.500" /><path d="M11 4v8L6.500 8z" fill="currentColor" stroke="none" /></Glyph></button>
        <button aria-label="일시정지"><Glyph w={2}><path d="M6 5v7M10 5v7" /></Glyph></button>
        <button aria-label="끝"><Glyph><path d="M11.500 4v8" strokeWidth="1.500" /><path d="M5 4v8L9.500 8z" fill="currentColor" stroke="none" /></Glyph></button>
      </div>
      <div className="relative mr-1 ml-[5px] h-[14px] w-[61px]">
        <svg width="61" height="14" viewBox="0 0 61 14" fill="none">
          <path d="M0 2.500h60" stroke="#777" />
          <path d="M.5 9v4M30.500 9v4M60.500 9v4M4.500 11v2M8.500 11v2M12.500 11v2M15.500 11v2M19.500 11v2M23.500 11v2M27.500 11v2M34.500 11v2M38.500 11v2M42.500 11v2M45.500 11v2M49.500 11v2M53.500 11v2M57.500 11v2" stroke="#000" />
          <path d="M3.500 1.500h4v5l-2 2-2-2z" fill="#fff" stroke="#000" />
        </svg>
        <input type="range" aria-label="재생 속도" min="0" max="16" defaultValue="1" className="absolute inset-0 w-full opacity-0" />
      </div>
      <div className="flex text-[#444]">
        {BOTTOM_TOOLS.map(([name, art, on]) => (
          <button key={name} aria-label={name} className={on ? "bg-[#e8e8e8] outline -outline-offset-1 outline-[#c4c4c4]" : ""}>
            {art ? <Glyph className="h-[14px]">{art}</Glyph> : <Gear className="h-[14px]" />}
          </button>
        ))}
      </div>
    </div>
  );
}

function DrawTools() {
  return (
    <nav aria-label="그리기 도구" className="flex w-7 shrink-0 flex-col self-start border border-[#c8c8c8] bg-[#fafafa] pt-px text-[#333]">
      {TOOLS.map(([name, art], i) => (
        <button
          key={name}
          aria-label={name}
          className={`flex h-[22px] items-center justify-center ${i === 1 ? "border-b border-[#c8c8c8]" : ""} ${name === "정보 조회" ? "mx-[2px] rounded-sm border border-[#b4b4b4] bg-[#eee]" : ""}`}
        >
          {art ? <Glyph>{art}</Glyph> : <Gear />}
        </button>
      ))}
    </nav>
  );
}

export default function App() {
  return (
    <div className="flex min-h-screen flex-col border-r-3 border-[#b4bac0] bg-[#dddcd6] font-[Roboto,'Noto_Sans_CJK_KR',sans-serif] text-[12px] leading-none text-black">
      <div className="flex flex-1 flex-col border-r border-[#5c6064]">
        <TitleBar />
        <Toolbar />
        <main className="flex flex-1 gap-[6px] px-[6px] pb-[6px]">
          <Sidebar />
          <section className="flex min-w-0 flex-1 flex-col self-start border-x border-b border-[#bdbdbd] bg-white">
            <QuoteBar />
            <PriceChart />
            <VolumeChart />
            <RsiChart />
            <DateAxis />
            <ScrollRow />
          </section>
          <DrawTools />
        </main>
      </div>
    </div>
  );
}
